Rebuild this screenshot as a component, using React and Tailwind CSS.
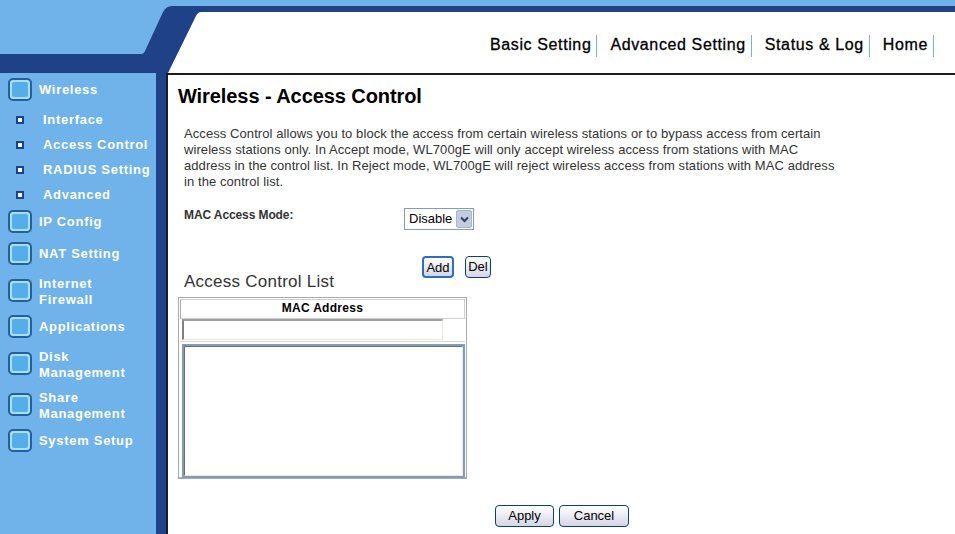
const menu = [
  { label: ["Wireless"], mt: "mt-[5px]", subs: ["Interface", "Access Control", "RADIUS Setting", "Advanced"] },
  { label: ["IP Config"], mt: "mt-[7px]" },
  { label: ["NAT Setting"], mt: "mt-[9px]" },
  { label: ["Internet", "Firewall"], mt: "mt-[11px]" },
  { label: ["Applications"], mt: "mt-[7px]" },
  { label: ["Disk", "Management"], mt: "mt-[11px]" },
  { label: ["Share", "Management"], mt: "mt-[9px]" },
  { label: ["System Setup"], mt: "mt-[7px]" },
];

const tabs = ["Basic Setting", "Advanced Setting", "Status & Log", "Home"];

function MenuIcon({ className }) {
  return (
    <span className={`w-[24px] h-[23px] shrink-0 rounded-[5px] border-2 border-[#23609f] bg-[#a8def0] p-[2px] ${className}`}>
      <span className="block w-full h-full rounded-[2px] bg-[#55aeea]" />
    </span>
  );
}

function PushButton({ children, className }) {
  return (
    <button className={`h-[22px] rounded-[4px] border border-[#0b3f78] bg-gradient-to-b from-white to-[#d5d5e6] text-[13px] text-black ${className}`}>
      {children}
    </button>
  );
}

export default function App() {
  return (
    <div className="w-[955px] h-[534px] overflow-hidden flex flex-col bg-[#6fb3ea] font-['Liberation_Sans',Arial,sans-serif]">
      {/* Header */}
      <div className="flex h-[73px] shrink-0">
        <svg width="204" height="73" viewBox="0 0 204 73" className="shrink-0">
          <path d="M0 54 H141 Q144 54 145 51 L163 12 Q166 6 172 6 H204 V73 H0 Z" fill="#1f4188" />
          <path d="M204 12 H201 Q198 12 196 16 L168 73 H204 Z" fill="#ffffff" />
        </svg>
        <div className="flex-1 flex flex-col">
          <div className="h-[6px] bg-[#6fb3ea]" />
          <div className="h-[6px] bg-[#1f4188]" />
          <div className="flex-1 bg-white flex justify-end items-start pt-[23px] pr-[21px]">
            {tabs.map((t) => (
              <div key={t} className="h-[22px] pl-[13px] pr-[5px] border-r border-[#6fb3ea] text-[16px] leading-[20px] tracking-[0.62px] text-black whitespace-nowrap [-webkit-text-stroke:0.3px_black]">
                {t}
              </div>
            ))}
          </div>
        </div>
      </div>

      <div className="flex flex-1 min-h-0">
        {/* Sidebar */}
        <div className="w-[156px] shrink-0 text-white font-bold text-[13px] leading-[16px] tracking-[0.7px]">
          {menu.map((m) => (
            <div key={m.label[0]} className={m.mt}>
              <div className="flex items-center pl-[8px] gap-[7px]">
                <MenuIcon className={m.label.length > 1 ? "self-start mt-[3px]" : ""} />
                <div>
                  {m.label.map((l) => (
                    <div key={l}>{l}</div>
                  ))}
                </div>
              </div>
              {m.subs && (
                <div className="mt-[11px] flex flex-col gap-[9px]">
                  {m.subs.map((s) => (
                    <div key={s} className="flex items-center pl-[16px] gap-[19px]">
                      <span className="w-[8px] h-[8px] bg-[#1f4188] p-[2px]">
                        <span className="block w-full h-full bg-white" />
                      </span>
                      <span>{s}</span>
                    </div>
                  ))}
                </div>
              )}
            </div>
          ))}
        </div>
        <div className="w-[10px] shrink-0 bg-[#1f4188]" />

        {/* Content */}
        <div className="flex-1 bg-white border-l-2 border-t-2 border-[#1c1c1c] text-[#333] pl-[10px]">
          <h1 className="mt-[10px] text-[20px] leading-[22px] tracking-[-0.08px] font-bold text-black">Wireless - Access Control</h1>
          <p className="mt-[19px] ml-[6px] text-[13px] leading-[16px] tracking-[0.08px] whitespace-nowrap">
            Access Control allows you to block the access from certain wireless stations or to bypass access from certain
            <br />
            wireless stations only. In Accept mode, WL700gE will only accept wireless access from stations with MAC
            <br />
            address in the control list. In Reject mode, WL700gE will reject wireless access from stations with MAC address
            <br />
            in the control list.
          </p>

          <div className="mt-[18px] ml-[6px] flex items-start">
            <div className="w-[220px] text-[12px] leading-[14px] tracking-[-0.1px] font-bold">MAC Access Mode:</div>
            <div className="w-[70px] h-[22px] border border-[#7f9db9] flex items-center justify-between pl-[4px] pr-[1px] text-[13px] text-black">
              <span>Disable</span>
              <span className="w-[16px] h-[18px] rounded-[2px] bg-[#c3cbe0] border border-[#aab4cc] flex items-center justify-center">
                <svg width="9" height="7" viewBox="0 0 9 7">
                  <path d="M1 1.5 L4.5 5 L8 1.5" fill="none" stroke="#30405f" strokeWidth="2" />
                </svg>
              </span>
            </div>
          </div>

          <div className="mt-[26px] ml-[244px] flex gap-[11px]">
            <PushButton className="w-[32px] border-2 border-[#2a6fc0]">Add</PushButton>
            <PushButton className="w-[26px]">Del</PushButton>
          </div>

          <div className="ml-[6px] mt-[-6px] text-[17px] leading-[20px] tracking-[0.25px]">Access Control List</div>

          <div className="mt-[5px] w-[289px] h-[182px] border border-[#a9a9b4] border-b-2 p-[1px] text-black">
            <div className="h-[20px] border border-[#cfcfcf] border-l-[#a9a9b4] text-center text-[12px] leading-[16px] tracking-[0.3px] font-bold">MAC Address</div>
            <div className="h-[23px] pl-[2px] pr-[22px] border-b border-[#d8d8d8]">
              <div className="h-[21px] border border-[#ece9d8] border-l-2 border-t-2 border-l-[#808080] border-t-[#a0a0a0]" />
            </div>
            <div className="mt-[2px] mx-[2px] h-[134px] w-[283px] border-2 border-[#7f9db9]">
              <div className="h-full border border-[#ece9d8] border-l-[#716f64] border-t-[#716f64]" />
            </div>
          </div>

          <div className="mt-[26px] ml-[317px] flex gap-[5px]">
            <PushButton className="w-[59px]">Apply</PushButton>
            <PushButton className="w-[70px]">Cancel</PushButton>
          </div>
        </div>
      </div>
    </div>
  );
}
